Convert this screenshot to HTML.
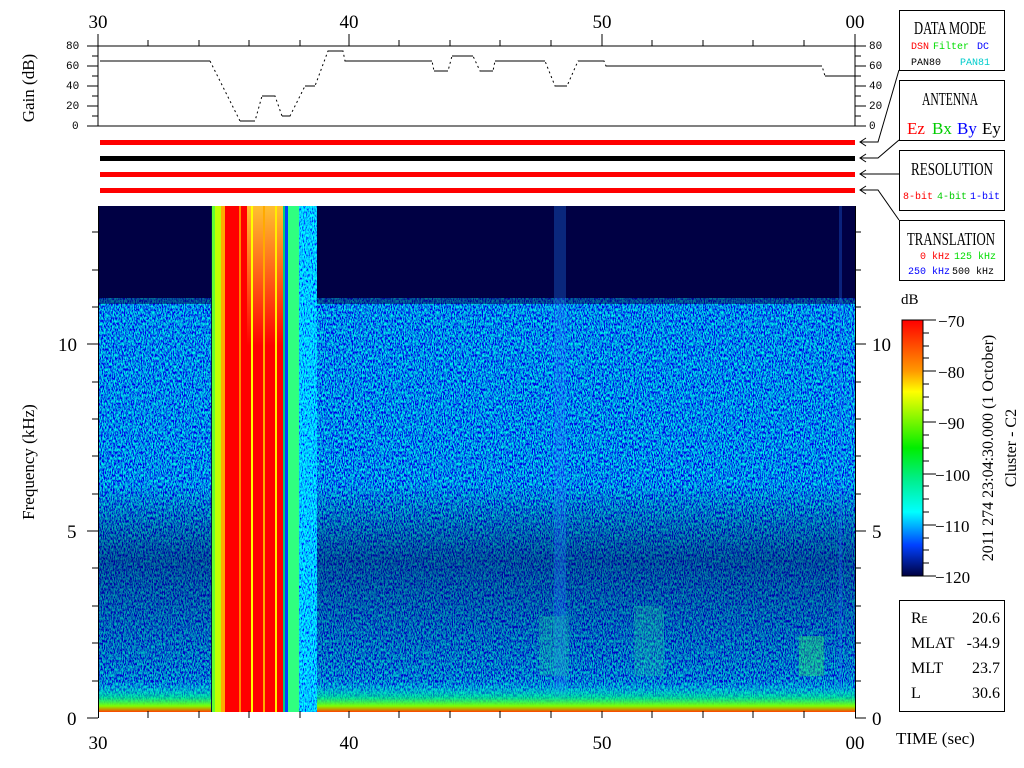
<!DOCTYPE html>
<html><head><meta charset="utf-8"><style>
html,body{margin:0;padding:0;background:#fff;width:1024px;height:768px;overflow:hidden}
svg{display:block}
text{font-family:"Liberation Serif",serif}
.m text, text.m{font-family:"Liberation Mono",monospace}
</style></head><body>
<svg width="1024" height="768" viewBox="0 0 1024 768" xmlns="http://www.w3.org/2000/svg">
<defs>
<filter id="nz" x="0" y="0" width="100%" height="100%">
<feTurbulence type="fractalNoise" baseFrequency="0.9 0.35" numOctaves="2" seed="3" result="t"/>
<feColorMatrix in="t" type="matrix" values="0 0 0 0 0  2.8 0 0 0 -1.1  0 0 0 0 0.8  0 0 0 0 1"/>
</filter>
<filter id="nz3" x="0" y="0" width="100%" height="100%">
<feTurbulence type="fractalNoise" baseFrequency="0.9 0.35" numOctaves="2" seed="9" result="t"/>
<feColorMatrix in="t" type="matrix" values="0 0 0 0 0  3 0 0 0 -0.9  0 0 0 0 1  0 0 0 0 1"/>
</filter>
<linearGradient id="vg" x1="0" y1="0" x2="0" y2="1">
<stop offset="0" stop-color="#000" stop-opacity="0"/>
<stop offset="0.55" stop-color="#000" stop-opacity="0"/>
<stop offset="0.7" stop-color="#000040" stop-opacity="0.45"/>
<stop offset="0.85" stop-color="#000040" stop-opacity="0.25"/>
<stop offset="1" stop-color="#000" stop-opacity="0"/>
</linearGradient>
<linearGradient id="cb" x1="0" y1="0" x2="0" y2="1">
<stop offset="0" stop-color="#ff0000"/>
<stop offset="0.2" stop-color="#ff9900"/>
<stop offset="0.28" stop-color="#ffff00"/>
<stop offset="0.5" stop-color="#00ee00"/>
<stop offset="0.62" stop-color="#00ee88"/>
<stop offset="0.75" stop-color="#00ffff"/>
<stop offset="0.88" stop-color="#0040ff"/>
<stop offset="1" stop-color="#000040"/>
</linearGradient>
<linearGradient id="bot" x1="0" y1="0" x2="0" y2="1">
<stop offset="0" stop-color="#00ffff" stop-opacity="0"/>
<stop offset="0.5" stop-color="#00ff80" stop-opacity="0.6"/>
<stop offset="0.8" stop-color="#80ff00"/>
<stop offset="1" stop-color="#ff4000"/>
</linearGradient>
<linearGradient id="topfade" x1="0" y1="0" x2="0" y2="1">
<stop offset="0" stop-color="#ffff40" stop-opacity="0.75"/>
<stop offset="1" stop-color="#ffff40" stop-opacity="0"/>
</linearGradient>
</defs>

<g font-size="19" text-anchor="middle" fill="#000">
<text x="98" y="28">30</text><text x="349" y="28">40</text><text x="602" y="28">50</text><text x="855" y="28">00</text>
</g>
<g stroke="#000" stroke-width="1">
<line x1="98" y1="34" x2="98" y2="126"/><line x1="349" y1="34" x2="349" y2="46"/><line x1="602" y1="34" x2="602" y2="46"/><line x1="855" y1="34" x2="855" y2="126"/>
<line x1="148" y1="40" x2="148" y2="46"/><line x1="199" y1="40" x2="199" y2="46"/><line x1="249" y1="40" x2="249" y2="46"/><line x1="300" y1="40" x2="300" y2="46"/>
<line x1="399" y1="40" x2="399" y2="46"/><line x1="450" y1="40" x2="450" y2="46"/><line x1="500" y1="40" x2="500" y2="46"/><line x1="551" y1="40" x2="551" y2="46"/>
<line x1="652" y1="40" x2="652" y2="46"/><line x1="703" y1="40" x2="703" y2="46"/><line x1="753" y1="40" x2="753" y2="46"/><line x1="804" y1="40" x2="804" y2="46"/>
<line x1="87" y1="46" x2="866" y2="46"/><line x1="87" y1="126" x2="866" y2="126"/>
<line x1="87" y1="66" x2="98" y2="66"/><line x1="87" y1="86" x2="98" y2="86"/><line x1="87" y1="106" x2="98" y2="106"/>
<line x1="92" y1="56" x2="98" y2="56"/><line x1="92" y1="76" x2="98" y2="76"/><line x1="92" y1="96" x2="98" y2="96"/><line x1="92" y1="116" x2="98" y2="116"/>
<line x1="855" y1="66" x2="866" y2="66"/><line x1="855" y1="86" x2="866" y2="86"/><line x1="855" y1="106" x2="866" y2="106"/>
<line x1="855" y1="56" x2="861" y2="56"/><line x1="855" y1="76" x2="861" y2="76"/><line x1="855" y1="96" x2="861" y2="96"/><line x1="855" y1="116" x2="861" y2="116"/>
</g>
<g class="m" font-size="11" fill="#000">
<text x="66" y="49">80</text><text x="66" y="69">60</text><text x="66" y="89">40</text><text x="66" y="109">20</text><text x="72" y="129">0</text>
<text x="869" y="49">80</text><text x="869" y="69">60</text><text x="869" y="89">40</text><text x="869" y="109">20</text><text x="869" y="129">0</text>
</g>
<text x="34" y="88" font-size="17" text-anchor="middle" transform="rotate(-90 34 88)">Gain (dB)</text>
<polyline fill="none" stroke="#000" stroke-width="1" stroke-dasharray="2 3"
 points="100,61 210,61 240,121 255,121 262,96 275,96 282,116 290,116 305,86 315,86 328,51 343,51 345,61 432,61 434,71 448,71 452,56 473,56 480,71 493,71 495,61 545,61 555,86 567,86 578,61 604,61 606,66 822,66 825,76 855,76"/>
<g stroke="#000" stroke-width="1" fill="none">
<line x1="100" y1="61" x2="210" y2="61"/><line x1="240" y1="121" x2="255" y2="121"/><line x1="262" y1="96" x2="275" y2="96"/><line x1="282" y1="116" x2="290" y2="116"/>
<line x1="305" y1="86" x2="315" y2="86"/><line x1="328" y1="51" x2="343" y2="51"/><line x1="345" y1="61" x2="432" y2="61"/><line x1="434" y1="71" x2="448" y2="71"/>
<line x1="452" y1="56" x2="473" y2="56"/><line x1="480" y1="71" x2="493" y2="71"/><line x1="495" y1="61" x2="545" y2="61"/><line x1="555" y1="86" x2="567" y2="86"/>
<line x1="578" y1="61" x2="604" y2="61"/><line x1="606" y1="66" x2="822" y2="66"/><line x1="825" y1="76" x2="855" y2="76"/>
</g>
<rect x="100" y="140" width="755" height="5" fill="#ff0000"/>
<rect x="100" y="156" width="755" height="5" fill="#000"/>
<rect x="100" y="172" width="755" height="5" fill="#ff0000"/>
<rect x="100" y="188" width="755" height="5" fill="#ff0000"/>

<svg x="99" y="206" width="756" height="506">
<rect x="0" y="0" width="756" height="506" filter="url(#nz)"/>
<rect x="0" y="0" width="756" height="506" fill="url(#vg)"/>
<rect x="0" y="0" width="756" height="92" fill="#000044"/>
<rect x="0" y="92" width="756" height="6" fill="#000044" opacity="0.5"/>
<rect x="455" y="0" width="12" height="506" fill="#2080ff" opacity="0.3"/>
<rect x="740" y="0" width="3" height="506" fill="#2070ff" opacity="0.3"/>
<rect x="0" y="476" width="756" height="30" fill="url(#bot)"/>
<rect x="440" y="410" width="30" height="60" fill="#20e0a0" opacity="0.25"/>
<rect x="535" y="400" width="30" height="70" fill="#20e0a0" opacity="0.25"/>
<rect x="700" y="430" width="25" height="40" fill="#30ff60" opacity="0.35"/>
<rect x="198" y="0" width="20" height="506" filter="url(#nz3)"/>
<rect x="194" y="0" width="6" height="506" fill="#30ff80"/>
<rect x="112" y="0" width="10" height="506" fill="#60ff30"/>
<rect x="116" y="0" width="6" height="506" fill="#c0ff00"/>
<rect x="122" y="0" width="62" height="506" fill="#ff0000"/>
<rect x="148" y="0" width="36" height="140" fill="url(#topfade)"/>
<rect x="122" y="0" width="4" height="506" fill="#ffaa00"/>
<rect x="140" y="0" width="2" height="506" fill="#ff8800"/>
<rect x="152" y="0" width="2" height="506" fill="#ffff00"/>
<rect x="164" y="0" width="2" height="506" fill="#ffaa00"/>
<rect x="176" y="0" width="2" height="506" fill="#ffee00"/>
<rect x="184" y="0" width="2" height="506" fill="#00cc80"/>
<rect x="186" y="0" width="3" height="506" fill="#0040ff"/>
<rect x="189" y="0" width="5" height="506" fill="#30ff80"/>
<rect x="112" y="0" width="1" height="506" fill="#002040"/>
</svg>
<line x1="98.5" y1="206" x2="98.5" y2="718" stroke="#000"/>
<line x1="855.5" y1="206" x2="855.5" y2="718" stroke="#000"/>
<g stroke="#000">
<line x1="87" y1="718" x2="98" y2="718"/><line x1="87" y1="531" x2="98" y2="531"/><line x1="87" y1="344" x2="98" y2="344"/>
<line x1="855" y1="718" x2="866" y2="718"/><line x1="855" y1="531" x2="866" y2="531"/><line x1="855" y1="344" x2="866" y2="344"/>
<line x1="92" y1="681" x2="98" y2="681"/><line x1="92" y1="643" x2="98" y2="643"/><line x1="92" y1="606" x2="98" y2="606"/><line x1="92" y1="568" x2="98" y2="568"/>
<line x1="92" y1="494" x2="98" y2="494"/><line x1="92" y1="456" x2="98" y2="456"/><line x1="92" y1="419" x2="98" y2="419"/><line x1="92" y1="382" x2="98" y2="382"/>
<line x1="92" y1="307" x2="98" y2="307"/><line x1="92" y1="270" x2="98" y2="270"/><line x1="92" y1="232" x2="98" y2="232"/>
<line x1="855" y1="681" x2="861" y2="681"/><line x1="855" y1="643" x2="861" y2="643"/><line x1="855" y1="606" x2="861" y2="606"/><line x1="855" y1="568" x2="861" y2="568"/>
<line x1="855" y1="494" x2="861" y2="494"/><line x1="855" y1="456" x2="861" y2="456"/><line x1="855" y1="419" x2="861" y2="419"/><line x1="855" y1="382" x2="861" y2="382"/>
<line x1="855" y1="307" x2="861" y2="307"/><line x1="855" y1="270" x2="861" y2="270"/><line x1="855" y1="232" x2="861" y2="232"/>
<line x1="148" y1="711" x2="148" y2="718"/><line x1="199" y1="711" x2="199" y2="718"/><line x1="249" y1="711" x2="249" y2="718"/><line x1="300" y1="711" x2="300" y2="718"/><line x1="349" y1="711" x2="349" y2="718"/>
<line x1="399" y1="711" x2="399" y2="718"/><line x1="450" y1="711" x2="450" y2="718"/><line x1="500" y1="711" x2="500" y2="718"/><line x1="551" y1="711" x2="551" y2="718"/><line x1="602" y1="711" x2="602" y2="718"/>
<line x1="652" y1="711" x2="652" y2="718"/><line x1="703" y1="711" x2="703" y2="718"/><line x1="753" y1="711" x2="753" y2="718"/><line x1="804" y1="711" x2="804" y2="718"/>
</g>
<g font-size="19" fill="#000">
<text x="58" y="351">10</text><text x="67" y="538">5</text><text x="67" y="725">0</text>
<text x="872" y="351">10</text><text x="872" y="538">5</text><text x="872" y="725">0</text>
</g>
<g font-size="19" text-anchor="middle">
<text x="98" y="749">30</text><text x="349" y="749">40</text><text x="602" y="749">50</text><text x="855" y="749">00</text>
</g>
<text x="34" y="462" font-size="17" text-anchor="middle" transform="rotate(-90 34 462)">Frequency (kHz)</text>
<text x="896" y="744" font-size="17">TIME (sec)</text>

<g fill="none" stroke="#000">
<rect x="899.5" y="10.5" width="105" height="60"/>
<rect x="899.5" y="80.5" width="105" height="60"/>
<rect x="899.5" y="150.5" width="105" height="60"/>
<rect x="899.5" y="220.5" width="105" height="60"/>
<polyline points="899,70 878,142 860,142"/><polyline points="866,138 860,142 866,146"/>
<polyline points="899,140 878,158 860,158"/><polyline points="866,154 860,158 866,162"/>
<polyline points="899,174 860,174"/><polyline points="866,170 860,174 866,178"/>
<polyline points="899,220 878,190 860,190"/><polyline points="866,186 860,190 866,194"/>
</g>
<g font-size="18">
<text x="914" y="34" textLength="72" lengthAdjust="spacingAndGlyphs">DATA MODE</text>
<text x="922" y="105" textLength="56" lengthAdjust="spacingAndGlyphs">ANTENNA</text>
<text x="911" y="175" textLength="82" lengthAdjust="spacingAndGlyphs">RESOLUTION</text>
<text x="907" y="245" textLength="88" lengthAdjust="spacingAndGlyphs">TRANSLATION</text>
</g>
<g class="m" font-size="10">
<text x="911" y="49" fill="#ff0000">DSN</text><text x="933" y="49" fill="#00dd00">Filter</text><text x="977" y="49" fill="#0000ff">DC</text>
<text x="911" y="65" fill="#000">PAN80</text><text x="960" y="65" fill="#00cccc">PAN81</text>
<text x="903" y="199" fill="#ff0000">8-bit</text><text x="937" y="199" fill="#00cc00">4-bit</text><text x="970" y="199" fill="#0000ff">1-bit</text>
<text x="920" y="259" fill="#ff0000">0 kHz</text><text x="954" y="259" fill="#00dd00">125 kHz</text>
<text x="908" y="274" fill="#0000ff">250 kHz</text><text x="952" y="274" fill="#000">500 kHz</text>
</g>
<g font-size="17">
<text x="907" y="134" fill="#ff0000">Ez</text><text x="932" y="134" fill="#00cc00">Bx</text><text x="957" y="134" fill="#0000ff">By</text><text x="982" y="134" fill="#000">Ey</text>
</g>
<text x="901" y="304" font-size="15">dB</text>
<rect x="902" y="320" width="21" height="256" fill="url(#cb)" stroke="#000"/>
<g stroke="#000">
<line x1="923" y1="320" x2="936" y2="320"/><line x1="923" y1="371" x2="936" y2="371"/><line x1="923" y1="422" x2="936" y2="422"/><line x1="923" y1="474" x2="936" y2="474"/><line x1="923" y1="525" x2="936" y2="525"/><line x1="923" y1="576" x2="936" y2="576"/>
<line x1="923" y1="333" x2="929" y2="333"/><line x1="923" y1="346" x2="929" y2="346"/><line x1="923" y1="358" x2="929" y2="358"/>
<line x1="923" y1="384" x2="929" y2="384"/><line x1="923" y1="397" x2="929" y2="397"/><line x1="923" y1="410" x2="929" y2="410"/>
<line x1="923" y1="435" x2="929" y2="435"/><line x1="923" y1="448" x2="929" y2="448"/><line x1="923" y1="461" x2="929" y2="461"/>
<line x1="923" y1="486" x2="929" y2="486"/><line x1="923" y1="499" x2="929" y2="499"/><line x1="923" y1="512" x2="929" y2="512"/>
<line x1="923" y1="538" x2="929" y2="538"/><line x1="923" y1="550" x2="929" y2="550"/><line x1="923" y1="563" x2="929" y2="563"/>
</g>
<g font-size="17">
<text x="938" y="327">−70</text><text x="938" y="378">−80</text><text x="938" y="429">−90</text><text x="935" y="481">−100</text><text x="935" y="532">−110</text><text x="935" y="583">−120</text>
</g>
<text x="993" y="448" font-size="16" text-anchor="middle" transform="rotate(-90 993 448)">2011 274 23:04:30.000 (1 October)</text>
<text x="1016" y="448" font-size="16" text-anchor="middle" transform="rotate(-90 1016 448)">Cluster - C2</text>
<rect x="899.5" y="600.5" width="105" height="111" fill="none" stroke="#000"/>
<g font-size="16">
<text x="911" y="623">R<tspan font-size="10" font-family="Liberation Mono, monospace">E</tspan></text><text x="911" y="648">MLAT</text><text x="911" y="673">MLT</text><text x="911" y="698">L</text>
</g>
<g font-size="16" text-anchor="end">
<text x="1000" y="623">20.6</text><text x="1000" y="648">-34.9</text><text x="1000" y="673">23.7</text><text x="1000" y="698">30.6</text>
</g>
</svg>
</body></html>
